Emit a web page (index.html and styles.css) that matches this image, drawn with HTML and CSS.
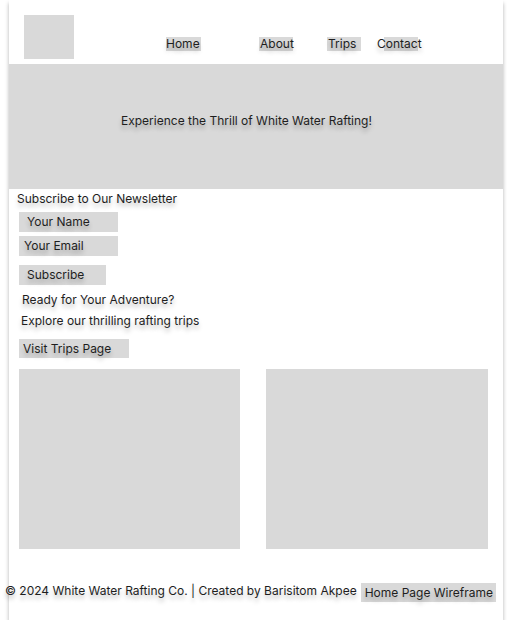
FILE: index.html
```html
<!DOCTYPE html>
<html lang="en">
<head>
<meta charset="utf-8">
<title>Home Page Wireframe</title>
<link rel="stylesheet" href="styles.css">
</head>
<body>
<div class="page">
  <header class="header">
    <div class="logo"></div>
    <nav class="nav">
      <span class="nav-item home">Home</span>
      <span class="nav-item about">About</span>
      <span class="nav-item trips">Trips</span>
      <span class="nav-item contact">Contact</span>
    </nav>
  </header>
  <section class="hero">
    <p class="hero-text">Experience the Thrill of White Water Rafting!</p>
  </section>
  <section class="content">
    <p class="news-title">Subscribe to Our Newsletter</p>
    <div class="field name">Your Name</div>
    <div class="field email">Your Email</div>
    <div class="btn subscribe">Subscribe</div>
    <p class="line ready">Ready for Your Adventure?</p>
    <p class="line explore">Explore our thrilling rafting trips</p>
    <div class="btn visit">Visit Trips Page</div>
    <div class="images">
      <div class="img img-left"></div>
      <div class="img img-right"></div>
    </div>
    <footer class="footer">
      <span class="copy">© 2024 White Water Rafting Co. | Created by Barisitom Akpee</span>
      <span class="label">Home Page Wireframe</span>
    </footer>
  </section>
</div>
</body>
</html>
```
FILE: styles.css
```css
html, body {
  margin: 0;
  padding: 0;
  background: #ffffff;
}

body {
  font-family: Inter, "Liberation Sans", sans-serif;
  font-size: 12px;
  color: #1e1e1e;
}

p { margin: 0; }

.page {
  margin-left: 9px;
  width: 494px;
  height: 620px;
  background: #ffffff;
  box-shadow: 0 3px 4px rgba(0, 0, 0, 0.3);
}

.header {
  height: 64px;
  display: flex;
  align-items: flex-start;
}

.logo {
  margin: 15px 0 0 15px;
  width: 50px;
  height: 44px;
  background: #d9d9d9;
}

.nav {
  display: flex;
  margin-top: 37px;
}

.nav-item {
  display: inline-block;
  height: 14px;
  line-height: 14px;
  background: #d9d9d9;
  white-space: nowrap;
  text-shadow: 0 4px 4px rgba(0, 0, 0, 0.25);
}

.home { margin-left: 92px; width: 35px; }
.about { margin-left: 58px; width: 34px; padding-left: 1px; box-sizing: border-box; }
.trips { margin-left: 34px; width: 34px; padding-left: 1px; box-sizing: border-box; }
.contact { margin-left: 23px; width: 34px; text-indent: -7px; }

.hero {
  height: 125px;
  background: #d9d9d9;
  padding: 49px 0 0 112px;
  box-sizing: border-box;
}

.hero-text,
.news-title,
.line,
.copy,
.field,
.btn,
.label {
  line-height: 16px;
  text-shadow: 0 4px 4px rgba(0, 0, 0, 0.25);
  white-space: nowrap;
}

.content {
  padding-top: 2px;
}

.news-title { margin-left: 8px; }

.field, .btn {
  background: #d9d9d9;
  box-sizing: border-box;
  margin-left: 10px;
}

.field {
  width: 99px;
  height: 20px;
  line-height: 20px;
}

.name { margin-top: 5px; padding-left: 8px; }
.email { margin-top: 4px; padding-left: 5px; }

.subscribe {
  margin-top: 9px;
  width: 87px;
  height: 20px;
  line-height: 20px;
  padding-left: 8px;
}

.ready { margin: 7px 0 0 13px; }
.explore { margin: 5px 0 0 12px; }

.visit {
  margin-top: 10px;
  width: 110px;
  height: 19px;
  line-height: 19px;
  padding-left: 4px;
}

.images {
  display: flex;
  gap: 26px;
  margin: 11px 0 0 10px;
}

.img {
  height: 180px;
  background: #d9d9d9;
}

.img-left { width: 221px; }
.img-right { width: 222px; }

.footer {
  display: flex;
  align-items: flex-start;
  margin: 34px 0 0 -4px;
}

.label {
  margin-left: 4px;
  width: 135px;
  height: 19px;
  line-height: 19px;
  padding-left: 4px;
  box-sizing: border-box;
  background: #d9d9d9;
}
```
